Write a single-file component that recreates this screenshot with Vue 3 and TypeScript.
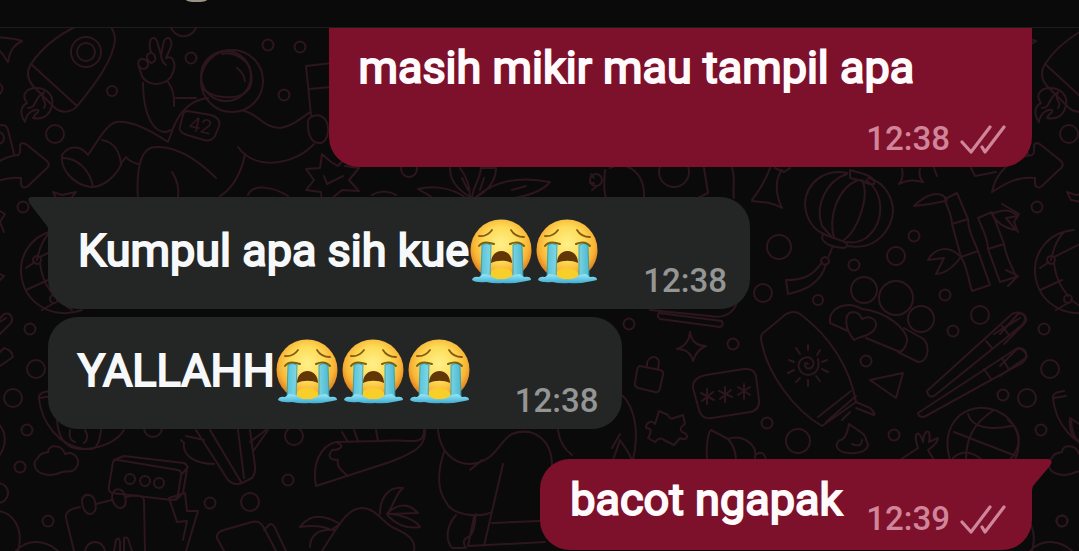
<script setup lang="ts">
interface Message {
  id: number
  side: 'in' | 'out'
  text: string
  sobs: number
  time: string
  tail: boolean
  continued: boolean
}

const messages: Message[] = [
  { id: 1, side: 'out', text: 'masih mikir mau tampil apa', sobs: 0, time: '12:38', tail: false, continued: true },
  { id: 2, side: 'in', text: 'Kumpul apa sih kue', sobs: 2, time: '12:38', tail: true, continued: false },
  { id: 3, side: 'in', text: 'YALLAHH', sobs: 3, time: '12:38', tail: false, continued: false },
  { id: 4, side: 'out', text: 'bacot ngapak', sobs: 0, time: '12:39', tail: true, continued: false },
]

type Dot = [number, number, number]

// Doodles that appear again at the start of the next pattern tile
const tileDots: Dot[] = [
  [86, 52, 15], [86, 52, 9], [112, 91, 5], [55, 134, 9], [23, 207, 5.5],
  [30, 329, 5.5], [36, 369, 9], [13, 398, 9], [27, 430, 5.5], [20, 467, 5.5], [-2, 138, 6],
  [37, 260, 4], [54, 299, 4], [48, 521, 5.5], [-2, 493, 10],
]
const tilePaths: string[] = [
  'M77 26C52 38 39 52 31 64C26 72 28 80 33 86L54 107C61 114 72 113 78 105C96 83 113 60 115 40C115 33 113 29 109 25',
  'M31 64L77 106',
  'M25 122C19 113 21 106 27 103C20 94 28 88 36 88C48 88 54 97 52 105C50 116 42 120 33 118C35 113 40 112 38 110C32 109 26 114 25 122Z',
  'M28 108C37 108 33 99 44 92C39 101 49 101 44 108',
  'M-10 34C0 40 10 36 22 41C14 45 10 50 8 62C4 58 3 50 -8 46',
  'M-22 192C-18 172 -2 157 18 155C21 154 20 149 20 146C20 143 24 142 27 145L47 161C50 164 49 166 47 168L28 186C24 189 21 187 21 183V178C4 176 -8 183 -22 192Z',
  'M-10 126L3 125Q7 126 8 130L14 154',
  'M0 84Q5 88 0 94',
  'M53 192L62 195L76 192L68 202L57 200Z',
  'M60 230C34 232 20 252 21 273C24 306 56 320 82 310',
  'M37 260C40 245 44 238 50 232M26 268L35 262M40 263C42 280 48 288 54 296M26 290L48 280M54 303L42 310M57 300L72 310M40 257L70 242',
  'M-12 204L5 214L0 222L4 232M-8 270L4 276L-6 286',
  'M-14 334L4 314Q10 312 12 318Q13 322 8 326L-10 344M-20 334L6 318M-14 366L4 348Q12 350 13 357L0 366L-14 376',
  'M50 391C42 392 38 394 39 399C42 424 60 446 84 449C104 448 118 440 124 430',
  'M40 398L52 396M57 420C58 436 64 447 78 449H92C97 448 100 440 101 430M70 430Q68 440 75 442M85 430Q90 438 84 443',
  'M44 474C34 472 32 462 38 458C40 452 46 453 48 452C48 444 62 444 65 454C74 450 82 460 76 468C72 474 66 470 62 472C56 475 50 476 44 474Z',
  'M-6 420C8 430 8 446 -4 460M-10 511C14 508 24 530 18 551M16 551C28 538 46 540 58 551',
]

const dots: Dot[] = [
  [191, 58, 5.5], [268, 45, 5.5], [300, 47, 5.5], [284, 95, 5.5], [409, 169, 8], [674, 172, 15], [596, 180, 6],
  [779, 247, 12], [763, 293, 9], [818, 300, 5], [854, 265, 5.5], [896, 256, 9], [914, 236, 5.5],
  [945, 295, 5.5], [953, 331, 5.5], [980, 315, 9],
  [864, 290, 13], [896, 298, 17], [921, 319, 13],
  [629, 324, 5.5], [733, 344, 5.5], [767, 423, 5.5], [798, 441, 12], [866, 361, 5.5], [894, 435, 5.5],
  [1003, 395, 5.5], [1062, 521, 5.5],
  [130, 479, 5], [145, 481, 5], [159, 483, 5], [153, 428, 9], [210, 503, 5.5], [250, 502, 9],
  [294, 436, 9], [288, 480, 5.5], [95, 552, 10],
]
const paths: string[] = [
  // hand and raised arm
  'M151 52C147 40 153 34 157 41L161 55L164 41C168 34 174 40 170 49L166 58C174 54 176 66 173 72C170 86 148 88 142 76L139 67',
  'M144 69C136 68 137 58 143 59C149 60 150 67 144 69M151 63C144 59 147 52 152 53C157 56 156 62 151 63M161 56Q162 62 166 65',
  'M143 83C143 105 149 132 166 132L171 130M168 82Q175 91 174 106M176 98L196 98',
  'M171 28C178 40 191 38 196 28',
  // helmet
  'M202 88C214 100 240 100 248 90C254 82 252 70 246 62C238 54 228 52 222 54',
  'M237 68Q244 73 245 81',
  // suit
  'M208 98C190 100 180 112 174 126L168 142C150 130 130 120 116 122C108 124 102 134 98 140L88 155C80 144 68 146 62 155C60 168 72 184 90 187C104 188 118 174 122 162L126 157Q130 162 138 164',
  'M62 158C78 158 90 170 93 187M102 140C114 142 120 152 121 165',
  'M187 111L211 115Q221 118 219 126L215 136Q211 142 204 140L187 135Q178 132 180 126L183 115Q184 111 187 111Z',
  'M138 200C136 170 140 147 156 147C180 146 202 164 216 178M172 172Q180 184 178 198',
  'M244 111C258 114 264 128 280 128C292 126 302 118 310 112M238 147C256 172 296 164 314 144M245 154C242 170 234 188 220 196',
  'M308 125C306 116 318 112 325 119C330 126 329 140 321 143C312 144 308 136 308 125Z',
  'M311 115L306 66L332 63M309 89L332 87',
  'M248 195C252 184 272 186 288 196',
  // spark
  'M352 158L344 159L338 166L331 162L322 154L320 168L306 169L314 180L306 190L321 192L322 204M324 176L327 184L343 176M345 166L359 168L349 180L359 191L342 190L330 200',
  // leaves
  'M450 168C450 184 462 192 470 197C470 186 466 176 460 168M472 197C474 184 480 180 481 168H496C496 182 486 192 476 197M476 197C500 176 530 178 550 182C540 194 520 198 500 200M466 198C450 186 430 186 418 189C426 194 432 196 434 200M462 178L468 190M484 178L480 190M512 190L526 186',
  'M372 195Q384 188 396 195M605 170Q603 190 606 198M610 168C624 160 645 170 644 198M591 174L594 178M590 183L594 183M592 190L596 187',
  'M704 168L708 193L694 200M732 168C736 180 732 190 734 198M770 168C766 180 758 192 752 200M775 168L784 172L790 168M782 170C774 180 776 196 782 208C772 202 762 202 752 201',
  // lantern
  'M847 173C826 168 806 182 805 204C806 220 814 230 824 234M868 178C886 182 896 202 892 218C886 238 870 250 848 246M847 174C828 180 814 204 822 226L831 236M858 180C838 188 828 216 834 238M862 180C870 196 858 230 844 240M866 180C884 192 886 222 866 238C858 243 852 243 847 242',
  'M850 170L864 174Q876 178 874 184Q870 185 862 181L850 178ZM823 234L845 242Q850 246 844 248C834 248 824 244 822 238ZM832 248L829 256',
  'M822 262C812 278 800 280 786 280L788 294C808 290 822 280 826 264M825 257a4 4 0 1 0 .1 0Z',
  // four-point sparkles
  'M902 169Q904 178 899 184Q910 178 923 182Q918 176 920 169M690 332Q692 346 706 346Q696 350 693 361Q690 349 677 349Q689 345 690 332Z',
  // bamboo
  'M945 199L957 193L968 219L952 224C952 214 946 206 945 199ZM968 219C968 232 974 240 978 251L961 257L952 224M961 257C968 268 968 280 972 291L990 285L978 251',
  'M947 200C940 188 924 196 914 206L930 204L945 201M961 257C950 246 936 246 928 260L944 258L936 274C946 274 954 266 961 257',
  'M978 218L992 212L1004 244L988 249C988 238 982 228 978 218ZM1004 244C1006 258 1012 266 1016 277L1000 282L988 249M992 214C1004 208 1010 210 1018 216L1006 218L1016 230C1004 228 996 222 992 214',
  'M971 168L975 176L996 172M934 168L937 176',
  // slipper with heart
  'M830 323C828 308 846 300 862 309M862 309C888 312 904 328 907 338C908 344 904 350 900 352L866 338M830 323L848 331M854 340C844 328 844 314 852 312C860 312 860 316 862 319C872 314 880 322 874 330C868 337 860 336 854 340ZM898 352L918 362C930 362 930 342 922 338L904 328',
  // board
  'M762 334L786 314Q794 310 800 314C830 336 850 368 856 402L822 426C794 410 768 374 762 344Q760 338 762 334ZM818 417L851 391M826 422L856 396M856 402L870 408Q876 414 874 415L856 408M842 420L850 412',
  'M808 364C803 360 804 371 811 368C817 363 811 355 804 358C795 362 798 374 808 375C817 374 820 368 818 359',
  'M808 345V350M796 348L800 354M789 360L794 362M788 373L794 370M796 382L800 378M808 386V380M820 381L816 376M828 372L822 369M827 360L822 362M820 350L817 355',
  // lock, password card, puzzle piece
  'M640 366L660 370Q664 371 663 375L660 388Q659 393 655 392L638 388Q634 386 635 383L637 370Q638 366 640 366ZM647 366C646 356 658 354 659 362L658 369',
  'M706 375L744 369Q754 368 756 376L759 400Q760 410 750 412L712 418Q702 420 699 410L693 388Q692 378 706 375Z',
  'M707 389V404M701 393L714 400M702 401L713 392M725 387V402M719 391L732 397M720 399L731 390M744 384V399M738 387L750 395M738 395L750 387',
  'M659 411L668 415Q670 420 674 418L683 415L685 424Q678 428 682 432C690 434 688 442 680 438L674 445L664 440Q660 436 655 442L648 438Q654 428 646 428C646 422 652 420 655 424Z',
  'M650 310L710 316Q732 320 738 300M659 313L722 321Q724 326 720 327L660 319Q656 316 659 313Z',
  // hat and planet
  'M707 460C706 446 708 432 711 430L728 439C742 434 758 444 755 458M728 439Q736 448 736 460M757 454Q764 450 766 460',
  'M613 460L620 440L628 452L632 460M612 448L620 434M621 394C634 406 640 430 633 460',
  // arrow head, chopsticks, swirl, glove
  'M870 380L903 373L896 398ZM927 391L1012 314Q1020 310 1025 317Q1026 320 1022 325L934 396Q928 398 927 391ZM986 341L992 348M1002 326L1009 335',
  'M918 413L1016 349Q1024 346 1026 354Q1027 359 1022 363L924 417Q918 417 918 413ZM984 369L991 379M1002 358L1008 368',
  'M849 424C860 432 866 434 866 440L868 444C868 452 856 454 848 453C836 452 834 444 840 440Q846 440 849 424ZM852 444Q862 448 862 440',
  'M900 460L918 448C912 430 920 430 923 442C924 428 932 428 929 442L938 438Q938 443 928 450L934 460',
  // basketball
  'M950 460C940 426 962 406 984 408C1010 410 1026 434 1015 460M954 432L1016 456M968 414C972 428 990 430 1012 426M994 410C972 424 966 440 966 460M953 458Q966 446 982 460',
  // leaf in the bowl
  'M1079 424L1070 418Q1068 434 1079 441',
  // keypad
  'M113 462Q114 459 118 460L178 470Q182 471 181 476L178 495Q177 500 172 500L112 493Q108 492 109 486ZM114 460L124 456L184 463Q188 465 187 469L183 493L176 500M181 475L188 467',
  // vest collar
  'M181 440L184 443C182 456 196 464 214 464M186 436L204 440M196 430L228 480Q234 486 242 483L252 478Q256 472 255 466L250 430M210 430L241 482M238 430L244 478M268 430L254 450',
  // calendar
  'M80 507Q64 510 66 518L74 551M96 504L112 500M126 497Q142 493 144 500L145 551M82 500C84 492 94 494 95 502C98 514 90 516 86 512Q82 508 82 500ZM112 496C114 486 124 488 125 497C128 508 120 510 116 506Q112 502 112 496ZM114 551L116 540Q119 536 120 542V551M124 551L124 538Q128 536 129 542L132 551',
  // lightning and book
  'M169 498L185 493L187 511L198 511L186 551M169 498L177 522L187 521L183 540',
  'M224 551L217 538Q216 532 224 530L252 522Q260 520 264 528L276 551M264 530L270 524Q274 524 276 530L286 551',
  // shoe and palms
  'M316 486C312 464 320 446 336 442L380 441C408 438 424 448 424 430M316 486L390 462C416 452 426 446 425 430M336 442C346 446 340 450 332 450C326 458 332 460 338 460C336 468 344 472 348 476M342 432L348 442M354 430L358 441M376 430L378 441M250 442L266 430',
  'M300 527C312 510 330 518 340 524L331 530Q320 524 300 527ZM310 547C310 536 318 528 335 530M380 514C380 496 390 486 403 488C394 496 394 506 387 514C396 504 408 502 418 513L388 514C400 514 416 520 420 527Q402 530 388 516',
  'M322 551C336 530 346 508 362 508C376 508 382 522 394 528C408 534 416 540 414 551',
  // seated figure
  'M438 430C440 452 454 464 470 464C496 462 498 442 512 434C534 426 552 440 552 466M444 452C438 470 436 488 446 502C452 516 480 518 492 512M503 464L484 546M470 470L482 460M456 515C448 524 444 538 452 548H466Q460 540 470 536C476 530 474 522 476 514M492 523L540 521M474 517L468 546L545 542M558 430Q560 446 572 455',
]
</script>

<template>
  <main class="chat">
    <svg class="wallpaper" viewBox="0 0 1079 551" preserveAspectRatio="xMinYMin slice" aria-hidden="true">
      <defs>
        <radialGradient id="face" cx="50%" cy="40%" r="56%">
          <stop offset="0" stop-color="#fff08a" />
          <stop offset="0.5" stop-color="#fddc58" />
          <stop offset="0.82" stop-color="#f8b233" />
          <stop offset="1" stop-color="#e08420" />
        </radialGradient>
        <linearGradient id="tear" x1="0" x2="1" y1="0" y2="0">
          <stop offset="0" stop-color="#58c3d8" />
          <stop offset="0.5" stop-color="#aeeff8" />
          <stop offset="1" stop-color="#4bb9d0" />
        </linearGradient>
        <linearGradient id="pool" x1="0" x2="0" y1="0" y2="1">
          <stop offset="0" stop-color="#9be9f6" />
          <stop offset="1" stop-color="#3cacd2" />
        </linearGradient>
      </defs>
      <g v-for="shift in [0, 1014]" :key="shift" :transform="`translate(${shift} 0)`">
        <circle v-for="(d, i) in tileDots" :key="'c' + i" :cx="d[0]" :cy="d[1]" :r="d[2]" />
        <path v-for="(p, i) in tilePaths" :key="'p' + i" :d="p" />
      </g>
      <circle v-for="(d, i) in dots" :key="'d' + i" :cx="d[0]" :cy="d[1]" :r="d[2]" />
      <circle cx="232" cy="81" r="31" />
      <circle cx="226" cy="76" r="25" />
      <path v-for="(p, i) in paths" :key="'q' + i" :d="p" />
      <text class="badge" x="188" y="130" transform="rotate(12 188 130)">42</text>
    </svg>

    <header class="top">
      <span class="avatar"></span>
    </header>

    <section class="thread">
      <article
        v-for="m in messages"
        :key="m.id"
        class="bubble"
        :class="[m.side, { tailed: m.tail, continued: m.continued, single: m.sobs === 0 && !m.continued }]"
      >
        <svg v-if="m.tail" class="tail" viewBox="0 0 20 31" aria-hidden="true">
          <path v-if="m.side === 'in'" d="M20 0H4Q-1 0 1 5L2 7L19 29L20 31Z" />
          <path v-else d="M0 0H16Q21 1 19 5L17 8L1 27L0 31Z" />
        </svg>
        <p class="text">{{ m.text }}<svg
          v-for="n in m.sobs"
          :key="n"
          class="sob"
          viewBox="0 0 66 66"
          role="img"
          aria-label="😭"
        >
          <circle cx="32" cy="32" r="30.5" fill="url(#face)" />
          <path d="M21 57Q22 50 32 50Q42 50 44 57Q42 62 32 62Q23 62 21 57Z" fill="#f8cf2a" />
          <path d="M10 18Q18 19 23 12M42 12Q46 19 55 19" fill="none" stroke="#8a5a14" stroke-width="1.8" stroke-linecap="round" />
          <path d="M22 45C22 29 43 29 43 45C37 42 28 42 22 45Z" fill="#633608" />
          <path d="M13 27Q17 24 22 27L21 59H12ZM44 27Q49 24 53 27L54 59H44Z" fill="url(#tear)" stroke="#279bb0" stroke-width="0.8" />
          <path d="M10 28Q14 22 25 26M41 26Q50 22 55 28" fill="none" stroke="#796114" stroke-width="2" stroke-linecap="round" />
          <path d="M3 62Q4 58 10 59L14 56L21 57Q26 62 32 61Q39 62 44 57L51 56L55 59Q62 58 62 62Q58 63 52 64Q44 66 34 65Q26 66 17 64Q7 65 3 62Z" fill="url(#pool)" />
        </svg></p>
        <div class="meta">
          <time>{{ m.time }}</time>
          <svg v-if="m.side === 'out'" class="ticks" viewBox="0 0 46 30" role="img" aria-label="✓✓">
            <path d="M2 18L11 28L30 3M22 23L25 28L44 3" />
          </svg>
        </div>
      </article>
    </section>
  </main>
</template>

<style>
body {
  margin: 0;
  background: #0a0a0a;
}
</style>

<style scoped>
.chat {
  position: relative;
  min-height: 100vh;
  overflow: hidden;
  background: #0a0a0a;
  font-family: Roboto, "Liberation Sans", sans-serif;
}

.wallpaper {
  position: absolute;
  inset: 0;
  width: 100%;
  height: 100%;
  fill: none;
  stroke: #2e161e;
  stroke-width: 2;
  stroke-linecap: round;
  stroke-linejoin: round;
}

.badge {
  font-size: 20px;
  fill: #2e161e;
  stroke: none;
}

.top {
  position: relative;
  box-sizing: border-box;
  height: 28px;
  padding-left: 186px;
  background: #0a0a0a;
  border-bottom: 1px solid #1d1d1e;
}

.avatar {
  display: block;
  width: 21px;
  height: 2px;
  border-radius: 0 0 50% 50% / 0 0 100% 100%;
  background: #9d9384;
}

.thread {
  position: relative;
  display: flex;
  flex-direction: column;
  gap: 8px;
  padding: 0 47px 0 48px;
}

.bubble {
  position: relative;
  display: flex;
  align-items: flex-end;
  gap: 42px;
  box-sizing: border-box;
  padding: 21px 23px 8px 30px;
  border-radius: 30px;
}

.in {
  align-self: flex-start;
  background: #242626;
  color: #f7f8fa;
}

.out {
  align-self: flex-end;
  background: #7d112b;
  color: #fffafc;
}

.tailed {
  margin-top: 22px;
}

.in.tailed {
  border-top-left-radius: 0;
}

.out.tailed {
  border-top-right-radius: 0;
}

.continued {
  flex-direction: column;
  align-items: stretch;
  gap: 23px;
  width: 71.4%;
  padding: 12px 26px 8px 29px;
  border-radius: 0 0 30px 30px;
}

.single {
  gap: 24px;
  padding: 13px 26px 11px 30px;
}

.tail {
  position: absolute;
  top: 0;
  width: 20px;
  height: 31px;
}

.in .tail {
  right: 100%;
  fill: #242626;
}

.out .tail {
  left: 100%;
  fill: #7d112b;
}

.text {
  margin: 0 0 17px;
  font-size: 45px;
  font-weight: 400;
  line-height: 56px;
  -webkit-text-stroke: 2px currentColor;
}

.single .text {
  margin-bottom: 11px;
}

.continued .text {
  margin-bottom: 0;
}

.sob {
  width: 66px;
  height: 66px;
  vertical-align: -18px;
}

.meta {
  display: flex;
  align-items: center;
  align-self: flex-end;
  gap: 10px;
  color: #949595;
  font-size: 33px;
  font-weight: 500;
  line-height: 40px;
}

.out .meta {
  color: #d0859a;
}

.ticks {
  width: 46px;
  height: 30px;
  fill: none;
  stroke: currentColor;
  stroke-width: 3.2;
  stroke-linecap: round;
  stroke-linejoin: round;
}
</style>
